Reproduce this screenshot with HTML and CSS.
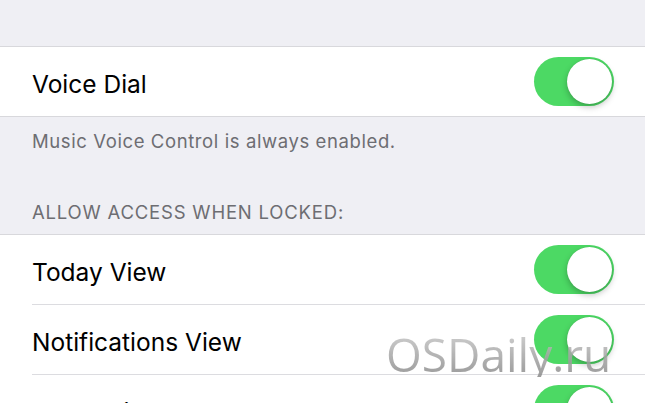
FILE: index.html
```html
<!DOCTYPE html>
<html lang="en">
<head>
    <meta charset="UTF-8">
    <title>Siri Settings</title>
    <link rel="stylesheet" href="styles.css">
</head>
<body>
    <div class="screen">
        <div class="spacer"></div>

        <div class="group">
            <div class="row">
                <span class="label">Voice Dial</span>
                <span class="switch on"><span class="knob"></span></span>
            </div>
        </div>
        <div class="footer">Music Voice Control is always enabled.</div>

        <div class="header">ALLOW ACCESS WHEN LOCKED:</div>
        <div class="group">
            <div class="row inset">
                <span class="label">Today View</span>
                <span class="switch on"><span class="knob"></span></span>
            </div>
            <div class="row inset">
                <span class="label">Notifications View</span>
                <span class="switch on"><span class="knob"></span></span>
            </div>
            <div class="row">
                <span class="label">Reply with Message</span>
                <span class="switch on"><span class="knob"></span></span>
            </div>
        </div>

        <!-- watermark sits over the list -->
        <div class="watermark">OSDaily.ru</div>
    </div>
</body>
</html>
```

FILE: styles.css
```css
body {
    margin: 0;
    padding: 0;
    background-color: #efeff4;
    font-family: 'Inter', 'Roboto', sans-serif;
}

.screen {
    position: relative;
    width: 645px;
    height: 403px;
    overflow: hidden;
}

.spacer {
    height: 46px;
}

.group {
    background: white;
    border-top: 1px solid #d8d8dc;
    border-bottom: 1px solid #d8d8dc;
}

.row {
    position: relative;
    height: 69px;
    display: flex;
    align-items: center;
    justify-content: space-between;
    padding: 0 31px 0 32px;
}

.row.inset {
    margin-bottom: 1px;
}

.row.inset::after {
    content: '';
    position: absolute;
    left: 32px;
    right: 0;
    bottom: -1px;
    height: 1px;
    background: #dcdce0;
}

.label {
    font-size: 24.5px;
    color: #000;
    padding-top: 4px;
}

.switch {
    position: relative;
    width: 80px;
    height: 49px;
    border-radius: 25px;
    background: #e5e5ea;
}

.switch.on {
    background: #4cd964;
}

.switch .knob {
    position: absolute;
    top: 2px;
    left: 2px;
    width: 45px;
    height: 45px;
    border-radius: 50%;
    background: white;
    box-shadow: 0 3px 6px rgba(0, 0, 0, 0.25), 0 0 1px rgba(0, 0, 0, 0.15);
}

.switch.on .knob {
    left: 33px;
}

.footer {
    padding: 13px 32px 31px;
    line-height: 22px;
    font-size: 18.5px;
    letter-spacing: 0.6px;
    color: #6d6d72;
}

.header {
    padding: 18px 32px 11px;
    line-height: 22px;
    font-size: 18.5px;
    letter-spacing: 0.8px;
    color: #6d6d72;
}

.watermark {
    position: absolute;
    left: 386px;
    top: 331px;
    font-family: 'Open Sans', sans-serif;
    font-size: 46px;
    line-height: 1;
    background: linear-gradient(#c8c8c8, #8a8a8a);
    -webkit-background-clip: text;
    background-clip: text;
    color: transparent;
    opacity: 0.85;
}
```
